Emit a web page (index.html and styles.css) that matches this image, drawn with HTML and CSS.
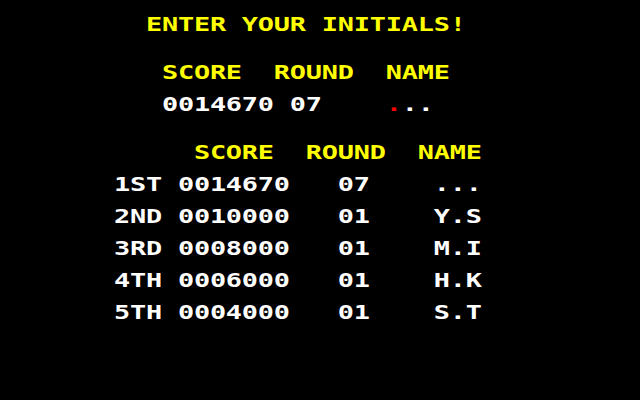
FILE: index.html
```html
<!DOCTYPE html>
<html>
<head>
<meta charset="utf-8">
<link rel="stylesheet" href="styles.css">
</head>
<body>
<div class="screen">
  <div class="line yellow title">         ENTER YOUR INITIALS!</div>
  <div class="line yellow gap-lg">          SCORE  ROUND  NAME</div>
  <div class="line white gap-sm">          0014670 07    <span class="red">.</span>..</div>
  <div class="line yellow gap-lg">            SCORE  ROUND  NAME</div>
  <div class="line white gap-sm">       1ST 0014670   07    ...</div>
  <div class="line white gap-sm">       2ND 0010000   01    Y.S</div>
  <div class="line white gap-sm">       3RD 0008000   01    M.I</div>
  <div class="line white gap-sm">       4TH 0006000   01    H.K</div>
  <div class="line white gap-sm">       5TH 0004000   01    S.T</div>
</div>
</body>
</html>
```
FILE: styles.css
```css
html, body {
  margin: 0;
  padding: 0;
  background: #000;
}
.screen {
  width: 640px;
  height: 400px;
  background: #000;
  padding: 16px 0 0 2px;
  box-sizing: border-box;
  overflow: hidden;
}
.line {
  height: 16px;
  line-height: 16px;
  font-family: "DejaVu Sans Mono", monospace;
  font-weight: bold;
  font-size: 19.2px;
  letter-spacing: -0.13px;
  white-space: pre;
  transform: scaleX(1.4) translateY(1.4px);
  transform-origin: left top;
}
.yellow { color: #ffff00; }
.white { color: #ffffff; }
.red { color: #ff0000; }
.gap-lg { margin-top: 32px; }
.gap-sm { margin-top: 16px; }
```
